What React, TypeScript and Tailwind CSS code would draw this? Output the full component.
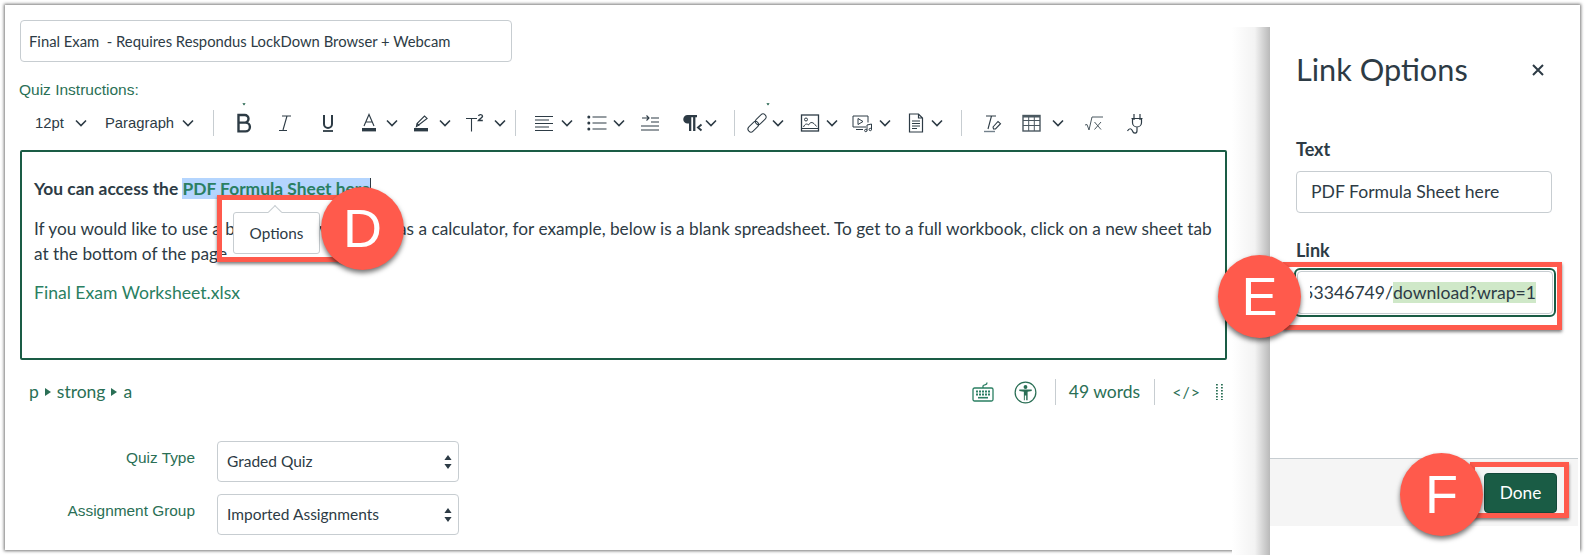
import React from "react";

const Chev = ({ className = "" }: { className?: string }) => (
  <svg viewBox="0 0 14 14" className={`w-[14px] h-[14px] shrink-0 ${className}`} fill="none" stroke="#2d3b45" strokeWidth="1.6">
    <path d="M2 4.5l5 5 5-5" />
  </svg>
);

const Ico = ({ className = "", children }: { className?: string; children: React.ReactNode }) => (
  <svg viewBox="0 0 24 24" className={`w-6 h-6 shrink-0 overflow-visible ${className}`} fill="none" stroke="#2d3b45" strokeWidth="1.2">
    {children}
  </svg>
);

const Div = ({ className = "" }: { className?: string }) => <div className={`w-px h-[26px] bg-[#c7cdd1] shrink-0 ${className}`} />;

const Toolbar = () => (
  <div className="flex items-center h-9 mt-[6px] -mb-px pl-[15px] text-[14.800px] text-[#2d3b45] font-['Liberation_Sans',sans-serif]">
    <span className="w-[32px] shrink-0">12pt</span>
    <Chev className="ml-[7px]" />
    <span className="ml-[17px] w-[67px] shrink-0">Paragraph</span>
    <Chev className="ml-[9px]" />
    <Div className="ml-[18px]" />
    {/* Bold */}
    <Ico className="ml-[18px]">
      <path d="M12 -5.500l-1.600 -2.200h3.200z" fill="#1a5c45" stroke="none" />
      <path d="M6.500 4h6.200a3.800 3.800 0 0 1 0 7.600H6.500zM6.500 11.600h7a4.400 4.400 0 0 1 0 8.800h-7z" strokeWidth="2.400" />
    </Ico>
    {/* Italic */}
    <Ico className="ml-[17px]">
      <path d="M9 5h9M14 5l-4 14M6 19.500h8" strokeWidth="1.100" />
    </Ico>
    {/* Underline */}
    <Ico className="ml-[19px]">
      <path d="M8 4v9a4 4 0 0 0 8 0V4" strokeWidth="2" />
      <path d="M7 20h10" strokeWidth="1.800" />
    </Ico>
    {/* Text colour */}
    <Ico className="ml-[17px]">
      <path d="M7 15L12 3.500 17 15M8.800 11h6.400" strokeWidth="1.100" />
      <rect x="5" y="17" width="14" height="3.400" fill="#2d3b45" stroke="none" />
    </Ico>
    <Chev className="ml-[4px]" />
    {/* Highlight */}
    <Ico className="ml-[10px]">
      <path d="M9 14.500l-1.600 1 .6-3L15.500 5l2.600 2.400zM8 12.500l2.400 2.200" strokeWidth="1.100" />
      <rect x="5" y="17" width="14" height="3.400" fill="#2d3b45" stroke="none" />
    </Ico>
    <Chev className="ml-[5px]" />
    {/* Superscript */}
    <Ico className="ml-[10px]">
      <path d="M4 7.500h11M9.500 7.500v13" strokeWidth="1.100" />
      <path d="M16.500 5c.6-2 4-1.800 4 .2 0 1.300-2.600 2.200-4 4.300h4.300" strokeWidth="1.400" />
    </Ico>
    <Chev className="ml-[7px]" />
    <Div className="ml-[8px]" />
    {/* Align */}
    <Ico className="ml-[16px]">
      <path d="M3 5.500h18M3 9h14M3 12.500h18M3 16h14M3 19.500h18" strokeWidth="1.100" />
    </Ico>
    <Chev className="ml-[4px]" />
    {/* List */}
    <Ico className="ml-[11px]">
      <path d="M7.500 6h14M7.500 12h14M7.500 18h14" strokeWidth="1.200" />
      <circle cx="3.800" cy="6" r="1.500" fill="#2d3b45" stroke="none" />
      <circle cx="3.800" cy="12" r="1.500" fill="#2d3b45" stroke="none" />
      <circle cx="3.800" cy="18" r="1.500" fill="#2d3b45" stroke="none" />
    </Ico>
    <Chev className="ml-[3px]" />
    {/* Indent */}
    <Ico className="ml-[12px]">
      <path d="M4 7h7M8.500 4.500L11 7l-2.500 2.500M13 7h8M13 11h8M3 15h18M3 19h18" strokeWidth="1.100" />
    </Ico>
    {/* Paragraph direction */}
    <Ico className="ml-[16px]">
      <path d="M9.500 4H19v2.200h-1.600V20h-2.300V6.200h-1.800V20H11v-7.500H9.500a4.250 4.250 0 0 1 0-8.500z" fill="#2d3b45" stroke="none" />
      <path d="M23.500 13.500l-3.500 3 3.500 3" strokeWidth="1.900" />
    </Ico>
    <Chev className="ml-[2px]" />
    <Div className="ml-[16px]" />
    {/* Link */}
    <Ico className="ml-[10px]">
      <path d="M23 -5.500l-1.600 -2.200h3.200z" fill="#1a5c45" stroke="none" />
      <g transform="rotate(-45 12 12)">
        <rect x="0.500" y="9" width="12.500" height="6" rx="3" strokeWidth="1" />
        <rect x="11" y="9" width="12.500" height="6" rx="3" strokeWidth="1" />
      </g>
    </Ico>
    <Chev className="ml-[2px]" />
    {/* Image */}
    <Ico className="ml-[13px]">
      <rect x="3.500" y="4" width="17" height="16" strokeWidth="1.300" />
      <circle cx="8" cy="8.500" r="1.500" strokeWidth="1" />
      <path d="M5.500 16c1.500-3.500 3.500-3.500 5-2 2-3.500 4.500-3.500 8 1.500M3.500 17.500h17" strokeWidth="1" />
    </Ico>
    <Chev className="ml-[3px]" />
    {/* Media */}
    <Ico className="ml-[11px]">
      <path d="M16 16H3V5h15v6.500M6 18.500h7" strokeWidth="1" />
      <path d="M8 7.500l5 3-5 3z" strokeWidth="1" />
      <path d="M17 19.500v-5.500l4.500-1v5.500" strokeWidth="1" />
      <circle cx="15.800" cy="19.500" r="1.200" strokeWidth="1" />
      <circle cx="20.300" cy="18.500" r="1.200" strokeWidth="1" />
    </Ico>
    <Chev className="ml-[4px]" />
    {/* Document */}
    <Ico className="ml-[12px]">
      <path d="M5.500 3h9l4 4v14h-13zM14.500 3v4h4" strokeWidth="1.200" />
      <path d="M8 10h8M8 12.500h8M8 15h8M8 17.500h5" strokeWidth="1.200" />
    </Ico>
    <Chev className="ml-[2px]" />
    <Div className="ml-[17px]" />
    {/* Clear formatting */}
    <Ico className="ml-[18px]">
      <path d="M6 5h10M11.500 5L8 18" strokeWidth="1.100" />
      <path d="M13 16l5-5.500 2.500 2.200-5 5.300h-2z" strokeWidth="1.100" />
      <path d="M4 20.500h11" strokeWidth="1.400" stroke="#73818c" />
    </Ico>
    {/* Table */}
    <Ico className="ml-[16px]">
      <rect x="3" y="4.500" width="17" height="15.500" strokeWidth="1.400" stroke="#4b5860" />
      <path d="M3 9.500h17M3 14.500h17M8.700 4.500V20M14.300 4.500V20" strokeWidth="1" stroke="#4b5860" />
      <rect x="3" y="4.500" width="17" height="2" fill="#4b5860" stroke="none" />
    </Ico>
    <Chev className="ml-[7px]" />
    {/* Sqrt */}
    <Ico className="ml-[17px]">
      <path d="M3 14l2 -.5 2 5.500L10 6h11M12.500 11l6.500 7.500M19 11l-6.500 7.500" strokeWidth="1" stroke="#4b5860" />
    </Ico>
    {/* Plug */}
    <Ico className="ml-[18px]">
      <path d="M10 3v6M16 3v6M7.500 7.500h11M8.500 8v3.500a4.500 4.500 0 0 0 9 0V8M13 16v3.500c0 3.500-3.500 3.500-4.500 .5S5 17 3.500 20" strokeWidth="1.200" />
    </Ico>
  </div>
);

const Updown = () => (
  <svg viewBox="0 0 8 14" className="w-2 h-[14px] shrink-0" fill="#2d3b45">
    <path d="M4 0l3.600 5H.4zM4 14L.4 9h7.200z" />
  </svg>
);

const Status = () => (
  <div className="flex items-center h-7 mt-[18px] w-[1203px] pl-[9px] text-[17.500px] text-[#2a6f55]">
    <span>p</span>
    <svg viewBox="0 0 6 8" className="w-[6px] h-2 mx-[6px]" fill="#2a6f55"><path d="M0 0l6 4-6 4z" /></svg>
    <span>strong</span>
    <svg viewBox="0 0 6 8" className="w-[6px] h-2 mx-[6px]" fill="#2a6f55"><path d="M0 0l6 4-6 4z" /></svg>
    <span>a</span>
    <svg viewBox="0 0 22 20" className="w-[22px] h-5 ml-auto shrink-0" fill="none" stroke="#2a7f62" strokeWidth="1.300">
      <rect x="1" y="6" width="20" height="13" rx="1.500" />
      <path d="M11 6V4c0-1 1-1 2.500-1.300S15 1.500 15 .5" />
      <path d="M4 9.500h14M4 12.500h14" strokeWidth="2" strokeDasharray="2 1" />
      <path d="M6 15.700h10" strokeWidth="1.600" />
    </svg>
    <svg viewBox="0 0 24 24" className="w-[23px] h-[23px] ml-[20px] shrink-0" fill="#2a6f55" stroke="none">
      <circle cx="12" cy="12" r="10.800" fill="none" stroke="#2a6f55" strokeWidth="1.300" />
      <circle cx="12" cy="6.300" r="2" />
      <path d="M5.500 8.800h13v1.600l-4.300.8v9h-1.500v-5h-1.400v5H10.300v-9l-4.800-.8z" />
    </svg>
    <div className="w-px h-[26px] bg-[#c7cdd1] ml-[18px] shrink-0" />
    <span className="ml-[13px] whitespace-nowrap">49 words</span>
    <div className="w-px h-[26px] bg-[#c7cdd1] ml-[14px] shrink-0" />
    <span className="ml-[17px] text-[16px] tracking-[1px]">&lt;/&gt;</span>
    <svg viewBox="0 0 7 16" className="w-[7px] h-4 ml-[15px] shrink-0" fill="#2a6f55">
      {[0, 3, 6, 9, 12, 15].flatMap((y) => [
        <rect key={`a${y}`} x="0" y={y} width="1.800" height="1.500" />,
        <rect key={`b${y}`} x="5" y={y} width="1.800" height="1.500" />,
      ])}
    </svg>
  </div>
);

const Row = ({ label, value, cls }: { label: string; value: string; cls: string }) => (
  <div className={`flex ${cls}`}>
    <div className="w-[175px] shrink-0 pt-[5px] text-right whitespace-nowrap text-[15.400px] text-[#2a6f55] font-['Liberation_Sans',sans-serif]">{label}</div>
    <div className="ml-[22px] w-[242px] h-full border border-[#c7cdd1] rounded-[4px] flex items-center justify-between pl-[9px] pr-[6px] text-[15.500px] text-[#2d3b45]">
      <span>{value}</span>
      <Updown />
    </div>
  </div>
);

const Marker = ({ letter, cls }: { letter: string; cls: string }) => (
  <div className={`absolute w-[83px] h-[83px] rounded-full bg-[#ff5a4c] shadow-[0_3px_5px_rgba(0,0,0,0.55)] flex items-center justify-center text-white text-[54px] font-['Liberation_Sans',sans-serif] ${cls}`}>
    {letter}
  </div>
);

const RedBox = ({ cls }: { cls: string }) => (
  <div className={`absolute border-[5px] border-[#ff5a4c] shadow-[0_2px_3px_rgba(0,0,0,0.5)] ${cls}`} />
);

export default function App() {
  return (
    <div className="relative w-[1585px] h-[555px] overflow-hidden bg-white font-['Lato',sans-serif] text-[#2d3b45]">
      <div className="absolute left-[5px] top-[5px] w-[1575px] h-[545px] bg-white shadow-[0_0_3px_1px_#777] flex">
        {/* Main column */}
        <div className="w-[1265px] shrink-0 pl-[15px] pt-[15px]">
          <div className="w-[492px] h-[42px] border border-[#c7cdd1] rounded-[4px] flex items-center pl-[8px] text-[14.800px] whitespace-pre">
            Final Exam  - Requires Respondus LockDown Browser + Webcam
          </div>
          <div className="mt-[19px] -ml-px h-[18px] leading-[18px] text-[15.500px] text-[#2a6f55] font-['Liberation_Sans',sans-serif]">Quiz Instructions:</div>
          <Toolbar />
          <div className="mt-[10px] w-[1207px] h-[210px] border-2 border-[#1a5c45] rounded-[2px] pl-[12px] pr-[10px] pt-[24px] text-[17.250px] leading-[25px]">
            <p className="font-bold h-[25px] text-[17.400px]">
              You can access the <span className="text-[#2a7f62] bg-[#b4d5fe] border-r border-[#2d3b45]">PDF Formula Sheet here</span>
            </p>
            <p className="mt-[15px]">
              If you would like to use a blank Excel worksheet as a calculator, for example, below is a blank spreadsheet. To get to a full workbook, click on a new sheet tab at the bottom of the page.
            </p>
            <p className="mt-[14px] text-[17.600px] text-[#2a7f62]">Final Exam Worksheet.xlsx</p>
          </div>
          <Status />
          <Row label="Quiz Type" value="Graded Quiz" cls="mt-[35px] h-[41px]" />
          <Row label="Assignment Group" value="Imported Assignments" cls="mt-[12px] h-[41px]" />
        </div>

        {/* Link Options tray */}
        <div className="relative w-[310px] -mb-[5px] mt-[22px] bg-white flex flex-col">
          <div className="absolute -left-[38px] top-0 bottom-0 w-[38px] bg-linear-to-r from-white via-[#f3f3f3] via-60% to-[#b9b9b9]" />
          <div className="flex items-center justify-between h-[44px] mt-[21px] pl-[26px] pr-[36px]">
            <span className="text-[30.700px] font-normal whitespace-nowrap">Link Options</span>
            <svg viewBox="0 0 12 12" className="w-3 h-3 shrink-0" fill="none" stroke="#2d3b45" strokeWidth="2"><path d="M1 1l10 10M11 1L1 11" /></svg>
          </div>
          <div className="mt-[45px] ml-[26px] h-[24px] leading-[24px] text-[18px] font-bold">Text</div>
          <div className="mt-[10px] ml-[26px] w-[256px] h-[42px] border border-[#c7cdd1] rounded-[4px] flex items-center pl-[14px] text-[17.600px]">PDF Formula Sheet here</div>
          <div className="mt-[25px] ml-[26px] h-[24px] leading-[24px] text-[18px] font-bold">Link</div>
          <div className="mt-[6px] ml-[24px] w-[262px] h-[49px] border-2 border-[#1a5c45] rounded-[6px] p-px">
            <div className="h-full border border-[#c7cdd1] rounded-[4px] flex items-center pl-[12px] pr-[16px] text-[17.600px]">
              <div className="w-full flex justify-end items-center overflow-hidden whitespace-nowrap leading-[21px]">
                <span className="shrink-0">/files/153346749/</span><span className="shrink-0 bg-[#cfe8c8]">download?wrap=1</span>
              </div>
            </div>
          </div>
          <div className="mt-[141px] w-[308px] h-[68px] bg-[#f5f5f5] border-t border-[#c7cdd1] flex items-center justify-end pr-[21px]">
            <div className="w-[73px] h-[40px] bg-[#1a5c45] border border-[#14483a] rounded-[4px] flex items-center justify-center text-[17.300px] text-white">Done</div>
          </div>
        </div>
      </div>

      {/* Options popover */}
      <div className="absolute left-[233px] top-[212px] w-[87px] h-[42px] bg-white border border-[#c7cdd1] rounded-[3px] flex items-center justify-center text-[15.300px]">
        Options
        <div className="absolute left-[36px] -top-[6px] w-[10px] h-[10px] rotate-45 bg-white border-l border-t border-[#c7cdd1]" />
      </div>

      <RedBox cls="left-[217px] top-[195px] w-[135px] h-[67px]" />
      <Marker letter="D" cls="left-[321px] top-[187px]" />
      <RedBox cls="left-[1283px] top-[262px] w-[279px] h-[68px]" />
      <Marker letter="E" cls="left-[1218px] top-[255px]" />
      <RedBox cls="left-[1470px] top-[462px] w-[99px] h-[56px]" />
      <Marker letter="F" cls="left-[1400px] top-[453px]" />
    </div>
  );
}
